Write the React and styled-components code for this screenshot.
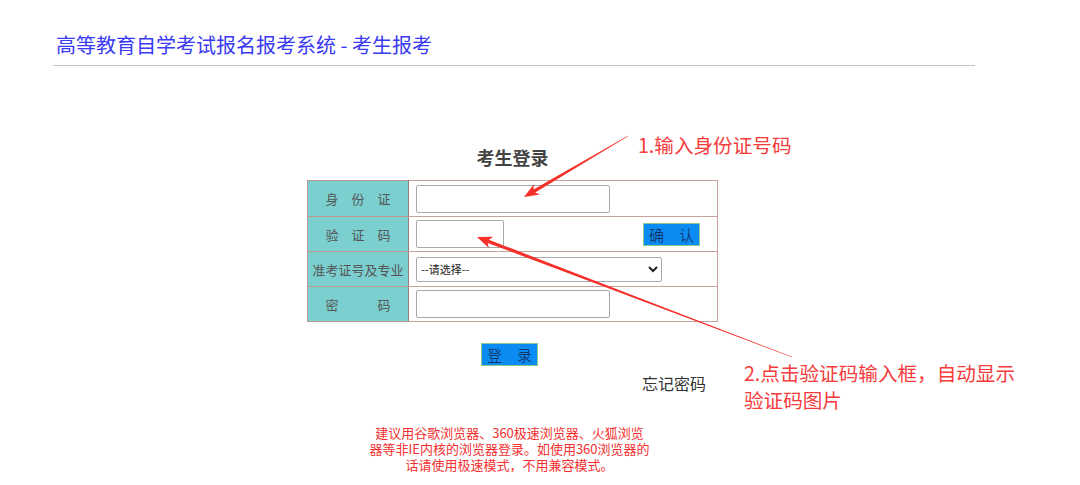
import React from 'react';
import styled, { createGlobalStyle } from 'styled-components';

const GlobalStyle = createGlobalStyle`
  body {
    margin: 0;
    background: #fff;
    font-family: "Noto Sans CJK SC", "Noto Sans", sans-serif;
  }
`;

const Page = styled.div`
  position: relative;
  width: 1080px;
  height: 485px;
  overflow: hidden;
`;

const Container = styled.div`
  width: 922px;
  margin-left: 53px;
`;

const Title = styled.h1`
  margin: 0;
  padding: 32px 0 0 3px;
  font-size: 20px;
  line-height: 26px;
  font-weight: normal;
  color: #3a3af2;
`;

const Rule = styled.div`
  height: 1px;
  margin-top: 7px;
  background: #c4c4c4;
`;

const Main = styled.div`
  display: flex;
  flex-direction: column;
  align-items: center;
  padding-top: 79px;
  padding-right: 3px;
`;

const Heading = styled.h2`
  margin: 0 0 11px;
  font-size: 18px;
  line-height: 24px;
  font-weight: bold;
  color: #444;
`;

const Table = styled.table`
  width: 411px;
  border-collapse: collapse;
  border: 1px solid #c8a39e;
`;

const Row = styled.tr`
  height: ${(p) => p.$h || 35}px;
`;

const Label = styled.td`
  width: 100px;
  padding: 0;
  background: #7bcfcf;
  border: 1px solid #c09893;
  border-right-color: #9a7a76;
  text-align: center;
  font-size: 13px;
  color: #555;
  white-space: nowrap;
`;

const Cell = styled.td`
  padding: 0 0 0 7px;
  border: 1px solid #c8a39e;
`;

const CellRow = styled.div`
  display: flex;
  align-items: center;
  justify-content: space-between;
  padding-right: 17px;
`;

const Input = styled.input`
  display: block;
  box-sizing: border-box;
  width: ${(p) => p.$w}px;
  height: 28px;
  border: 1px solid #a9a9a9;
  border-radius: 2px;
  background: #fff;
  outline: none;
`;

const Select = styled.select`
  display: block;
  width: 246px;
  height: 25px;
  border: 1px solid #a9a9a9;
  border-radius: 2px;
  background: #fff;
  font-size: 11px;
  color: #222;
  font-family: "Noto Sans CJK SC", sans-serif;
`;

const BlueButton = styled.button`
  box-sizing: border-box;
  width: 57px;
  height: 23px;
  padding: 0;
  border: 1px solid #8cc98c;
  background: #0a8cf2;
  color: #16234a;
  font-size: 15px;
  line-height: 21px;
  font-family: "Noto Sans CJK SC", serif;
  font-weight: 300;
  cursor: pointer;
`;

const LoginButton = styled(BlueButton)`
  margin-top: 21px;
  margin-left: -6px;
`;

const Forgot = styled.div`
  width: 411px;
  margin-top: 8px;
  padding-right: 12px;
  box-sizing: border-box;
  text-align: right;
  font-size: 16px;
  line-height: 18px;
  color: #333;
`;

const Notes = styled.div`
  margin-top: 33px;
  padding-right: 6px;
  text-align: center;
  color: #f23030;
  font-size: 13px;
`;

const NoteLine = styled.div`
  height: 16px;
  line-height: 16px;
`;

const Callout = styled.div`
  position: absolute;
  left: ${(p) => p.$x}px;
  top: ${(p) => p.$y}px;
  font-size: 19.6px;
  line-height: 27px;
  color: #f53b3b;
  white-space: nowrap;
`;

const Overlay = styled.svg`
  position: absolute;
  left: 0;
  top: 0;
  pointer-events: none;
`;

function arrowPoints(x1, y1, x2, y2) {
  const len = Math.hypot(x2 - x1, y2 - y1);
  const dx = (x2 - x1) / len;
  const dy = (y2 - y1) / len;
  const nx = -dy;
  const ny = dx;
  const headLen = 15;
  const headW = 6;
  const shaft = 1.7;
  const bx = x2 - dx * headLen;
  const by = y2 - dy * headLen;
  const pts = [
    [x1 + nx * 0.2, y1 + ny * 0.2],
    [bx + dx * 3 + nx * shaft, by + dy * 3 + ny * shaft],
    [bx + nx * headW, by + ny * headW],
    [x2, y2],
    [bx - nx * headW, by - ny * headW],
    [bx + dx * 3 - nx * shaft, by + dy * 3 - ny * shaft],
    [x1 - nx * 0.2, y1 - ny * 0.2],
  ];
  return pts.map((p) => p.map((v) => v.toFixed(1)).join(',')).join(' ');
}

const arrows = [
  { from: [628, 136], to: [524, 197] },
  { from: [792, 357], to: [477, 237] },
];

const notes = [
  '建议用谷歌浏览器、360极速浏览器、火狐浏览',
  '器等非IE内核的浏览器登录。如使用360浏览器的',
  '话请使用极速模式，不用兼容模式。',
];

export default function App() {
  return (
    <>
      <GlobalStyle />
      <Page>
        <Container>
          <Title>高等教育自学考试报名报考系统 - 考生报考</Title>
          <Rule />
          <Main>
            <Heading>考生登录</Heading>
            <Table>
              <tbody>
                <Row $h={36}>
                  <Label>身　份　证</Label>
                  <Cell>
                    <Input $w={194} />
                  </Cell>
                </Row>
                <Row>
                  <Label>验　证　码</Label>
                  <Cell>
                    <CellRow>
                      <Input $w={88} />
                      <BlueButton>确　认</BlueButton>
                    </CellRow>
                  </Cell>
                </Row>
                <Row>
                  <Label>准考证号及专业</Label>
                  <Cell>
                    <Select defaultValue="">
                      <option value="">--请选择--</option>
                    </Select>
                  </Cell>
                </Row>
                <Row>
                  <Label>密　　　码</Label>
                  <Cell>
                    <Input $w={194} type="password" />
                  </Cell>
                </Row>
              </tbody>
            </Table>
            <LoginButton>登　录</LoginButton>
            <Forgot>忘记密码</Forgot>
            <Notes>
              {notes.map((line) => (
                <NoteLine key={line}>{line}</NoteLine>
              ))}
            </Notes>
          </Main>
        </Container>
        <Callout $x={638} $y={131}>1.输入身份证号码</Callout>
        <Callout $x={744} $y={359}>
          2.点击验证码输入框，自动显示
          <br />
          验证码图片
        </Callout>
        <Overlay width="1080" height="485">
          {arrows.map((a, i) => (
            <polygon key={i} points={arrowPoints(...a.from, ...a.to)} fill="#f5302a" />
          ))}
        </Overlay>
      </Page>
    </>
  );
}
